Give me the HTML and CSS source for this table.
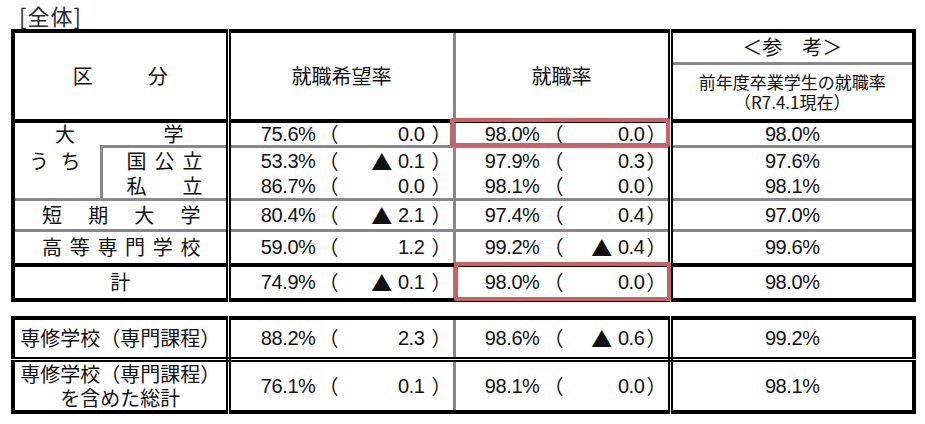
FILE: index.html
```html
<!DOCTYPE html>
<html lang="ja">
<head>
<meta charset="utf-8">
<title>全体</title>
<link rel="stylesheet" href="styles.css">
</head>
<body>
<div class="page">
  <div class="title">[全体]</div>
  <div class="t1wrap">
    <table class="tbl t1">
      <colgroup><col class="ca"><col class="cb"><col class="c2"><col class="c3"><col class="c4"></colgroup>
      <tr class="h1">
        <th colspan="2" rowspan="2" class="k1 hd"><div class="kubun"><span>区</span><span>分</span></div></th>
        <th rowspan="2" class="k2 hd">就職希望率</th>
        <th rowspan="2" class="k3 hd">就職率</th>
        <th class="k4 ref">＜参　考＞</th>
      </tr>
      <tr class="h2">
        <th class="k4 hd prev"><div>前年度卒業学生の就職率</div><div>（R7.4.1現在）</div></th>
      </tr>
      <tr class="r-dai">
        <td colspan="2" class="k1"><div class="dist d-dai"><span>大</span><span>学</span></div></td>
        <td class="k2 gb"><div class="val"><span class="pct">75.6%</span><span class="po">（</span><span class="chg">0.0</span><span class="pc">）</span></div></td>
        <td class="k3 gb"><div class="val"><span class="pct">98.0%</span><span class="po">（</span><span class="chg">0.0</span><span class="pc">）</span></div></td>
        <td class="k4 gb num">98.0%</td>
      </tr>
      <tr class="r-koku">
        <td rowspan="2" class="uchi"><div class="dist d-uchi"><span>う</span><span>ち</span></div></td>
        <td class="k1 gt"><div class="dist d-sub"><span>国</span><span>公</span><span>立</span></div></td>
        <td class="k2"><div class="val"><span class="pct">53.3%</span><span class="po">（</span><span class="chg"><span class="tri">▲</span>0.1</span><span class="pc">）</span></div></td>
        <td class="k3"><div class="val"><span class="pct">97.9%</span><span class="po">（</span><span class="chg">0.3</span><span class="pc">）</span></div></td>
        <td class="k4 num">97.6%</td>
      </tr>
      <tr class="r-shi">
        <td class="k1 gb"><div class="dist d-sub"><span>私</span><span>立</span></div></td>
        <td class="k2 gb"><div class="val"><span class="pct">86.7%</span><span class="po">（</span><span class="chg">0.0</span><span class="pc">）</span></div></td>
        <td class="k3 gb"><div class="val"><span class="pct">98.1%</span><span class="po">（</span><span class="chg">0.0</span><span class="pc">）</span></div></td>
        <td class="k4 gb num">98.1%</td>
      </tr>
      <tr class="r-tan">
        <td colspan="2" class="k1 gb"><div class="dist d-wide"><span>短</span><span>期</span><span>大</span><span>学</span></div></td>
        <td class="k2 gb"><div class="val"><span class="pct">80.4%</span><span class="po">（</span><span class="chg"><span class="tri">▲</span>2.1</span><span class="pc">）</span></div></td>
        <td class="k3 gb"><div class="val"><span class="pct">97.4%</span><span class="po">（</span><span class="chg">0.4</span><span class="pc">）</span></div></td>
        <td class="k4 gb num">97.0%</td>
      </tr>
      <tr class="r-ko">
        <td colspan="2" class="k1 bb"><div class="dist d-wide"><span>高</span><span>等</span><span>専</span><span>門</span><span>学</span><span>校</span></div></td>
        <td class="k2 bb"><div class="val"><span class="pct">59.0%</span><span class="po">（</span><span class="chg">1.2</span><span class="pc">）</span></div></td>
        <td class="k3 bb"><div class="val"><span class="pct">99.2%</span><span class="po">（</span><span class="chg"><span class="tri">▲</span>0.4</span><span class="pc">）</span></div></td>
        <td class="k4 bb num">99.6%</td>
      </tr>
      <tr class="r-kei">
        <td colspan="2" class="k1 center">計</td>
        <td class="k2"><div class="val"><span class="pct">74.9%</span><span class="po">（</span><span class="chg"><span class="tri">▲</span>0.1</span><span class="pc">）</span></div></td>
        <td class="k3"><div class="val"><span class="pct">98.0%</span><span class="po">（</span><span class="chg">0.0</span><span class="pc">）</span></div></td>
        <td class="k4 num">98.0%</td>
      </tr>
    </table>
    <div class="mark mark-1"></div>
    <div class="mark mark-2"></div>
  </div>

  <table class="tbl t2">
    <colgroup><col class="c1"><col class="c2"><col class="c3"><col class="c4"></colgroup>
    <tr class="s1">
      <td class="k1 db center">専修学校（専門課程）</td>
      <td class="k2 db"><div class="val"><span class="pct">88.2%</span><span class="po">（</span><span class="chg">2.3</span><span class="pc">）</span></div></td>
      <td class="k3 db"><div class="val"><span class="pct">98.6%</span><span class="po">（</span><span class="chg"><span class="tri">▲</span>0.6</span><span class="pc">）</span></div></td>
      <td class="k4 db num">99.2%</td>
    </tr>
    <tr class="s2">
      <td class="k1 center two"><div>専修学校（専門課程）</div><div>を含めた総計</div></td>
      <td class="k2"><div class="val"><span class="pct">76.1%</span><span class="po">（</span><span class="chg">0.1</span><span class="pc">）</span></div></td>
      <td class="k3"><div class="val"><span class="pct">98.1%</span><span class="po">（</span><span class="chg">0.0</span><span class="pc">）</span></div></td>
      <td class="k4 num">98.1%</td>
    </tr>
  </table>
</div>
</body>
</html>
```

FILE: styles.css
```css
html, body {
  margin: 0;
  padding: 0;
  background: #fff;
}

body {
  font-family: "Noto Sans CJK JP", "Noto Sans", sans-serif;
  color: #111;
  width: 925px;
  height: 424px;
  overflow: hidden;
}

.page {
  padding-left: 11px;
}

.title {
  height: 29px;
  line-height: 30px;
  font-size: 22px;
  letter-spacing: 1px;
  padding-left: 8px;
  color: #2a2a2a;
}

.t1wrap {
  position: relative;
  width: 905px;
}

.tbl {
  border-collapse: collapse;
  table-layout: fixed;
  width: 905px;
  border: 4px solid #000;
}

.tbl th,
.tbl td {
  padding: 0;
  font-weight: normal;
  font-size: 20px;
  line-height: 22px;
  vertical-align: middle;
  white-space: nowrap;
}

.t1 col.ca { width: 88px; }
.t1 col.cb { width: 127px; }
.tbl col.c2 { width: 226px; }
.tbl col.c3 { width: 216px; }
.tbl col.c4 { width: 244px; }
.t2 col.c1 { width: 215px; }

/* column separators */
.k1 { border-right: 5px double #000; }
.k2 { border-right: 3px solid #888; }
.k3 { border-right: 5px double #000; }
.uchi {
  border-right: 3px solid #888;
  border-bottom: 3px solid #888;
}
.tbl td.uchi {
  vertical-align: top;
  line-height: 28px;
}

/* row separators */
.hd { border-bottom: 4px solid #000; }
.ref { border-bottom: 3px solid #888; }
.gb { border-bottom: 3px solid #888; }
.gt { border-top: 3px solid #888; }
.bb { border-bottom: 4px solid #000; }
.db { border-bottom: 5px double #000; }

/* row heights */
.h1 { height: 32px; }
.h2 { height: 58px; }
.r-dai { height: 25px; }
.r-koku { height: 28px; }
.r-shi { height: 25px; }
.r-tan { height: 31px; }
.r-ko { height: 34px; }
.r-kei { height: 35px; }
.s1 { height: 42px; }
.s2 { height: 48px; }

/* header */
.hd, .ref { text-align: center; }
.kubun {
  display: flex;
  justify-content: center;
  gap: 55px;
}
.tbl th.prev {
  font-size: 17px;
  line-height: 20px;
}

/* distributed labels */
.dist {
  display: flex;
  justify-content: space-between;
}
.d-dai { padding: 0 42px 0 40px; }
.d-uchi { padding: 0 19px 0 14px; }
.d-sub { padding: 0 23px 0 24px; }
.d-wide { padding: 0 25px 0 27px; }

.center { text-align: center; }
.tbl td.two { line-height: 24px; }

/* value cells */
.val {
  display: flex;
  align-items: center;
  font-family: "Liberation Sans", "Noto Sans CJK JP", sans-serif;
  font-size: 20px;
  letter-spacing: -0.4px;
}
.pct { text-align: right; flex: none; }
.po, .pc {
  flex: none;
  width: 20px;
  font-family: "Noto Sans CJK JP", sans-serif;
  font-size: 20px;
  letter-spacing: 0;
}
.chg {
  flex: 1;
  display: flex;
  justify-content: flex-end;
  align-items: center;
}
.tri {
  font-family: "Noto Sans CJK JP", sans-serif;
  font-size: 21px;
  line-height: 20px;
  margin-right: 6px;
}

.k2 .pct { width: 85px; }
.k2 .po { margin-left: 3px; }
.k2 .pc { margin-left: 7px; margin-right: 1px; }

.k3 .pct { width: 84px; }
.k3 .po { margin-left: 4px; }
.k3 .pc { margin-left: 2px; margin-right: 1px; }

.tbl td.num {
  text-align: center;
  font-family: "Liberation Sans", "Noto Sans CJK JP", sans-serif;
  font-size: 20px;
  letter-spacing: -0.4px;
}

/* highlight boxes */
.mark {
  position: absolute;
  border: 4px solid #cd5f66;
  border-radius: 2px;
  box-sizing: border-box;
}
.mark-1 { left: 439px; top: 89px; width: 220px; height: 29px; }
.mark-2 { left: 443px; top: 233px; width: 217px; height: 39px; }

.t2 { margin-top: 14px; }
```
